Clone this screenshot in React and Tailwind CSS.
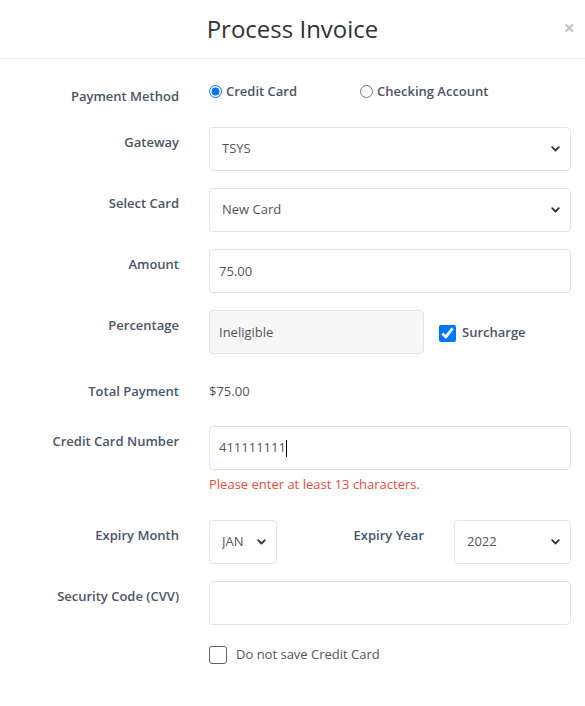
import { useState } from "react";

const Chevron = () => (
  <svg
    className="pointer-events-none absolute right-[11px] top-1/2 -translate-y-1/2"
    width="9"
    height="6"
    viewBox="0 0 9 6"
    fill="none"
  >
    <path d="M1.2 1.2L4.5 4.5L7.8 1.2" stroke="#333" strokeWidth="1.8" strokeLinecap="round" strokeLinejoin="round" />
  </svg>
);

const Label = ({ children, className = "" }) => (
  <div className={`w-[179px] shrink-0 text-right text-[13px] leading-[18px] font-semibold text-[#4a5568] ${className}`}>
    {children}
  </div>
);

const SelectBox = ({ value, options, className = "" }) => (
  <div className={`relative ${className}`}>
    <select
      defaultValue={value}
      className="h-[44px] w-full appearance-none rounded-[4px] border border-[#e3e3e3] bg-white pl-[12px] pr-[28px] text-[13px] text-[#555] outline-none"
    >
      {options.map((o) => (
        <option key={o}>{o}</option>
      ))}
    </select>
    <Chevron />
  </div>
);

const TextBox = ({ value, disabled }) => (
  <input
    type="text"
    defaultValue={value}
    disabled={disabled}
    className={`h-[44px] w-full rounded-[4px] border border-[#e3e3e3] px-[9px] text-[13px] text-[#555] outline-none ${
      disabled ? "bg-[#f7f7f7]" : "bg-white"
    }`}
  />
);

export default function App() {
  const [method, setMethod] = useState("card");
  const [surcharge, setSurcharge] = useState(true);
  const [noSave, setNoSave] = useState(false);

  return (
    <div className="h-[706px] w-[585px] bg-white font-['Open_Sans',sans-serif]">
      {/* header */}
      <div className="relative flex h-[59px] items-center justify-center border-b border-[#e8e8e8]">
        <h1 className="text-[24px] leading-none font-medium text-[#333]">Process Invoice</h1>
        <button className="absolute right-[10px] top-[18px] text-[20px] font-bold leading-none text-[#c4c4c4]">
          ×
        </button>
      </div>

      <div className="pt-[22px] pr-[14px]">
        {/* Payment method */}
        <div className="mb-[17px] flex h-[29px]">
          <Label className="pt-[6px]">Payment Method</Label>
          <div className="ml-[30px] flex items-start pt-[1px] text-[13px] leading-[18px] font-semibold text-[#4a5568]">
            <label className="flex w-[151px] items-center gap-[4px]">
              <input
                type="radio"
                checked={method === "card"}
                onChange={() => setMethod("card")}
                className="m-0 h-[13px] w-[13px] accent-[#0075ff]"
              />
              Credit Card
            </label>
            <label className="flex items-center gap-[4px]">
              <input
                type="radio"
                checked={method === "check"}
                onChange={() => setMethod("check")}
                className="m-0 h-[13px] w-[13px] accent-[#0075ff]"
              />
              Checking Account
            </label>
          </div>
        </div>

        {/* Gateway */}
        <div className="mb-[17px] flex">
          <Label className="pt-[6px]">Gateway</Label>
          <SelectBox className="ml-[30px] flex-1" value="TSYS" options={["TSYS"]} />
        </div>

        {/* Select card */}
        <div className="mb-[17px] flex">
          <Label className="pt-[6px]">Select Card</Label>
          <SelectBox className="ml-[30px] flex-1" value="New Card" options={["New Card"]} />
        </div>

        {/* Amount */}
        <div className="mb-[17px] flex">
          <Label className="pt-[6px]">Amount</Label>
          <div className="ml-[30px] flex-1">
            <TextBox value="75.00" />
          </div>
        </div>

        {/* Percentage */}
        <div className="mb-[17px] flex">
          <Label className="pt-[6px]">Percentage</Label>
          <div className="ml-[30px] flex flex-1 items-center">
            <div className="w-[215px]">
              <TextBox value="Ineligible" disabled />
            </div>
            <label className="ml-[15px] flex items-center gap-[6px] pt-[2px] text-[13px] font-semibold text-[#4a5568]">
              <input
                type="checkbox"
                checked={surcharge}
                onChange={() => setSurcharge(!surcharge)}
                className="m-0 h-[17px] w-[17px] accent-[#0075ff]"
              />
              Surcharge
            </label>
          </div>
        </div>

        {/* Total */}
        <div className="mb-[17px] flex h-[38px] items-center">
          <Label className="pt-[2px]">Total Payment</Label>
          <div className="ml-[30px] pt-[2px] text-[13px] leading-[18px] text-[#555]">$75.00</div>
        </div>

        {/* Card number */}
        <div className="mb-[27px] flex">
          <Label className="pt-[6px]">Credit Card Number</Label>
          <div className="ml-[30px] flex-1">
            <div className="flex h-[44px] w-full items-center rounded-[4px] border border-[#e3e3e3] bg-white px-[9px] text-[13px] text-[#555]">
              411111111
              <span className="h-[17px] w-px bg-black" />
            </div>
            <div className="mt-[5px] text-[13px] leading-[18px] text-[#f04a3c]">
              Please enter at least 13 characters.
            </div>
          </div>
        </div>

        {/* Expiry */}
        <div className="mb-[17px] flex">
          <Label className="pt-[6px]">Expiry Month</Label>
          <div className="ml-[30px] flex flex-1">
            <SelectBox className="w-[68px]" value="JAN" options={["JAN"]} />
            <div className="flex-1 pt-[6px] text-right text-[13px] leading-[18px] font-semibold text-[#4a5568]">
              Expiry Year
            </div>
            <SelectBox className="ml-[30px] w-[117px]" value="2022" options={["2022"]} />
          </div>
        </div>

        {/* CVV */}
        <div className="mb-[20px] flex">
          <Label className="pt-[6px]">Security Code (CVV)</Label>
          <div className="ml-[30px] flex-1">
            <TextBox value="" />
          </div>
        </div>

        {/* Do not save */}
        <div className="flex">
          <div className="w-[179px] shrink-0" />
          <label className="ml-[30px] flex items-center gap-[9px] text-[13px] text-[#555]">
            <span
              onClick={() => setNoSave(!noSave)}
              className="h-[18px] w-[18px] rounded-[3px] border border-[#666] bg-white"
            />
            Do not save Credit Card
          </label>
        </div>
      </div>
    </div>
  );
}
